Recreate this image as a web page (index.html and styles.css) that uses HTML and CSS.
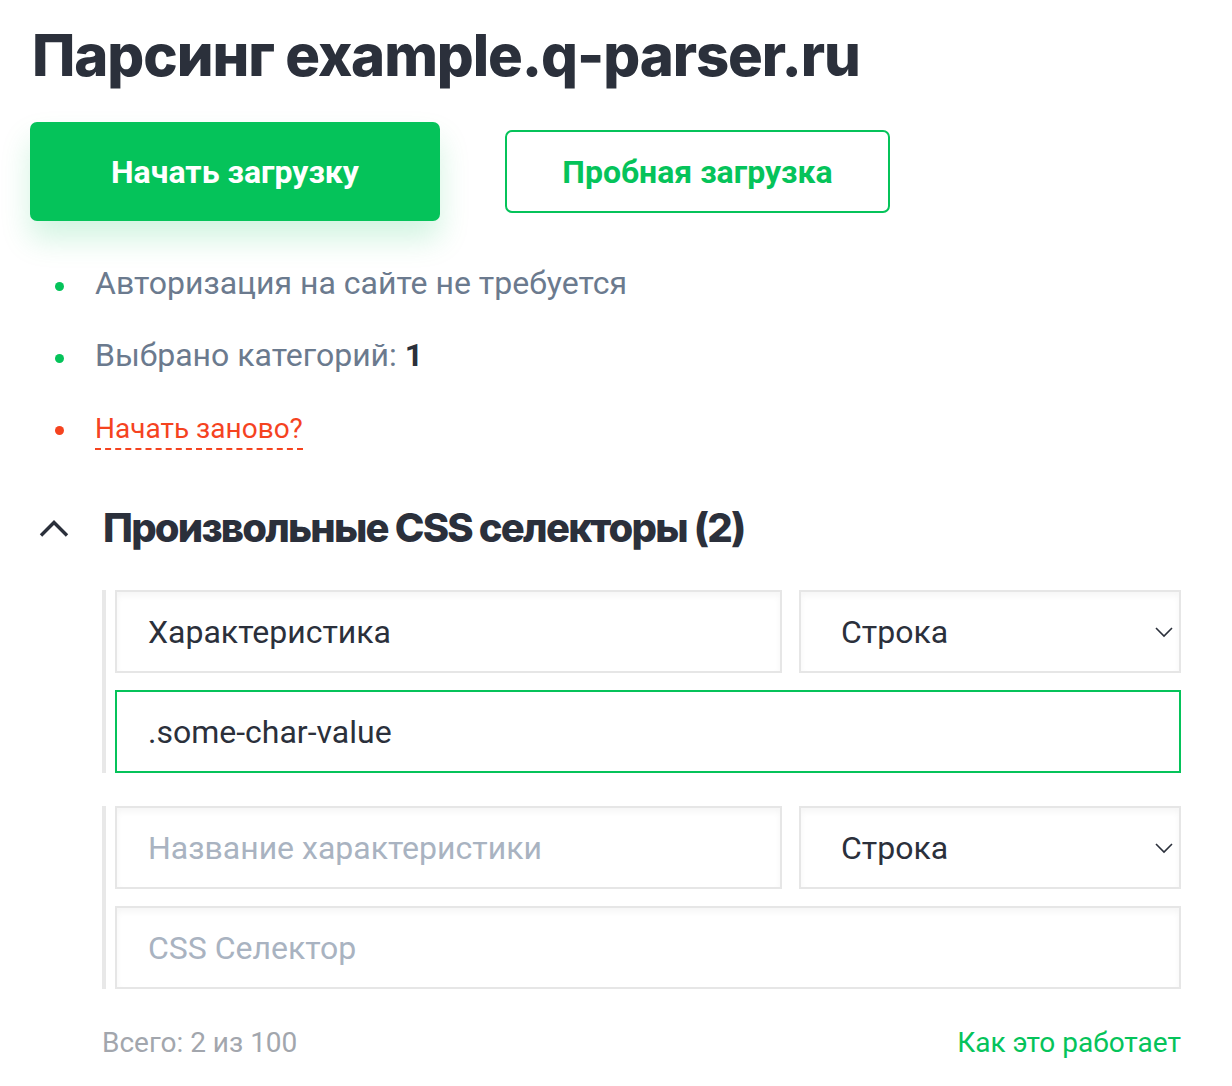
FILE: index.html
```html
<!DOCTYPE html>
<html lang="ru">
<head>
<meta charset="utf-8">
<title>Парсинг</title>
<link rel="stylesheet" href="styles.css">
</head>
<body>
<div class="page">
  <h1 class="title">Парсинг example.q-parser.ru</h1>
  <div class="actions">
    <button class="btn btn-primary">Начать загрузку</button>
    <button class="btn btn-outline">Пробная загрузка</button>
  </div>
  <ul class="status">
    <li class="status-item ok">Авторизация на сайте не требуется</li>
    <li class="status-item ok">Выбрано категорий: <b class="count">1</b></li>
    <li class="status-item warn"><span class="restart">Начать заново?</span></li>
  </ul>
  <div class="section-head">
    <svg class="chev-up" width="32" height="20" viewBox="0 0 32 20"><path d="M3 17.5 L16 4.5 L29 17.5" fill="none" stroke="#2b303b" stroke-width="3.4"/></svg>
    <h2 class="section-title">Произвольные CSS селекторы (2)</h2>
  </div>
  <div class="groups">
    <div class="group">
      <div class="row">
        <div class="field name">Характеристика</div>
        <div class="field select">Строка<svg class="chev-down" width="18" height="12" viewBox="0 0 18 12"><path d="M1 2 L9 10 L17 2" fill="none" stroke="#2b303b" stroke-width="1.6"/></svg></div>
      </div>
      <div class="field active">.some-char-value</div>
    </div>
    <div class="group">
      <div class="row">
        <div class="field name placeholder">Название характеристики</div>
        <div class="field select">Строка<svg class="chev-down" width="18" height="12" viewBox="0 0 18 12"><path d="M1 2 L9 10 L17 2" fill="none" stroke="#2b303b" stroke-width="1.6"/></svg></div>
      </div>
      <div class="field placeholder">CSS Селектор</div>
    </div>
  </div>
  <div class="footer">
    <span class="total">Всего: 2 из 100</span>
    <a class="help">Как это работает</a>
  </div>
</div>
</body>
</html>
```
FILE: styles.css
```css
* { box-sizing: border-box; }
body {
  margin: 0;
  background: #fff;
  font-family: Roboto, "Liberation Sans", sans-serif;
  color: #2b303b;
}
.page {
  padding: 22px 51px 0 30px;
}
.title {
  margin: 0 0 0 2px;
  font-family: Inter, "Liberation Sans", sans-serif;
  font-weight: 800;
  font-size: 58px;
  line-height: 66px;
  letter-spacing: -1.1px;
  color: #2b303b;
}
.actions {
  display: flex;
  align-items: center;
  gap: 65px;
  margin-top: 34px;
}
.btn {
  font-family: Roboto, "Liberation Sans", sans-serif;
  font-weight: 700;
  font-size: 32px;
  border-radius: 7px;
  cursor: pointer;
}
.btn-primary {
  width: 410px;
  height: 99px;
  background: #05c35a;
  border: none;
  color: #fff;
  box-shadow: 0 18px 30px rgba(5, 195, 90, 0.18);
}
.btn-outline {
  width: 385px;
  height: 83px;
  background: #fff;
  border: 2px solid #05c35a;
  color: #05c35a;
}
.status {
  list-style: none;
  margin: 43px 0 0;
  padding: 0;
}
.status-item {
  position: relative;
  padding-left: 65px;
  font-size: 32px;
  line-height: 38px;
  color: #6b7a8e;
  margin-bottom: 34px;
}
.status-item::before {
  content: "";
  position: absolute;
  left: 25px;
  top: 18px;
  width: 9px;
  height: 9px;
  border-radius: 50%;
  background: #05c35a;
}
.status-item.warn::before { background: #f5431f; }
.count { color: #2b303b; font-weight: 700; }
.restart {
  font-size: 28px;
  color: #f5431f;
  border-bottom: 2px dashed #f5431f;
  padding-bottom: 3px;
}
.section-head {
  display: flex;
  align-items: center;
  gap: 33px;
  margin-top: 57px;
  padding-left: 8px;
}
.section-title {
  margin: 0;
  font-family: Inter, "Liberation Sans", sans-serif;
  font-weight: 800;
  font-size: 40px;
  line-height: 46px;
  letter-spacing: -1.8px;
}
.groups {
  margin-top: 39px;
  padding-left: 72px;
  display: flex;
  flex-direction: column;
  gap: 33px;
}
.group {
  border-left: 4px solid #e8e8e8;
  padding-left: 9px;
  display: flex;
  flex-direction: column;
  gap: 17px;
}
.row {
  display: flex;
  gap: 17px;
}
.field {
  height: 83px;
  border: 2px solid #e6e6e6;
  box-shadow: inset 0 4px 6px rgba(0, 0, 0, 0.04);
  display: flex;
  align-items: center;
  padding-left: 31px;
  font-size: 32px;
  color: #2b303b;
  background: #fff;
}
.field.name { flex: 0 0 667px; }
.field.select {
  flex: 1;
  padding-left: 40px;
  padding-right: 6px;
  justify-content: space-between;
}
.field.active {
  border-color: #05c35a;
  box-shadow: none;
}
.field.placeholder { color: #a9b3c1; }
.footer {
  display: flex;
  justify-content: space-between;
  align-items: baseline;
  margin-top: 37px;
  padding-left: 72px;
  font-size: 28px;
}
.total { color: #a2a6ad; }
.help { color: #05c35a; text-decoration: none; }
```
